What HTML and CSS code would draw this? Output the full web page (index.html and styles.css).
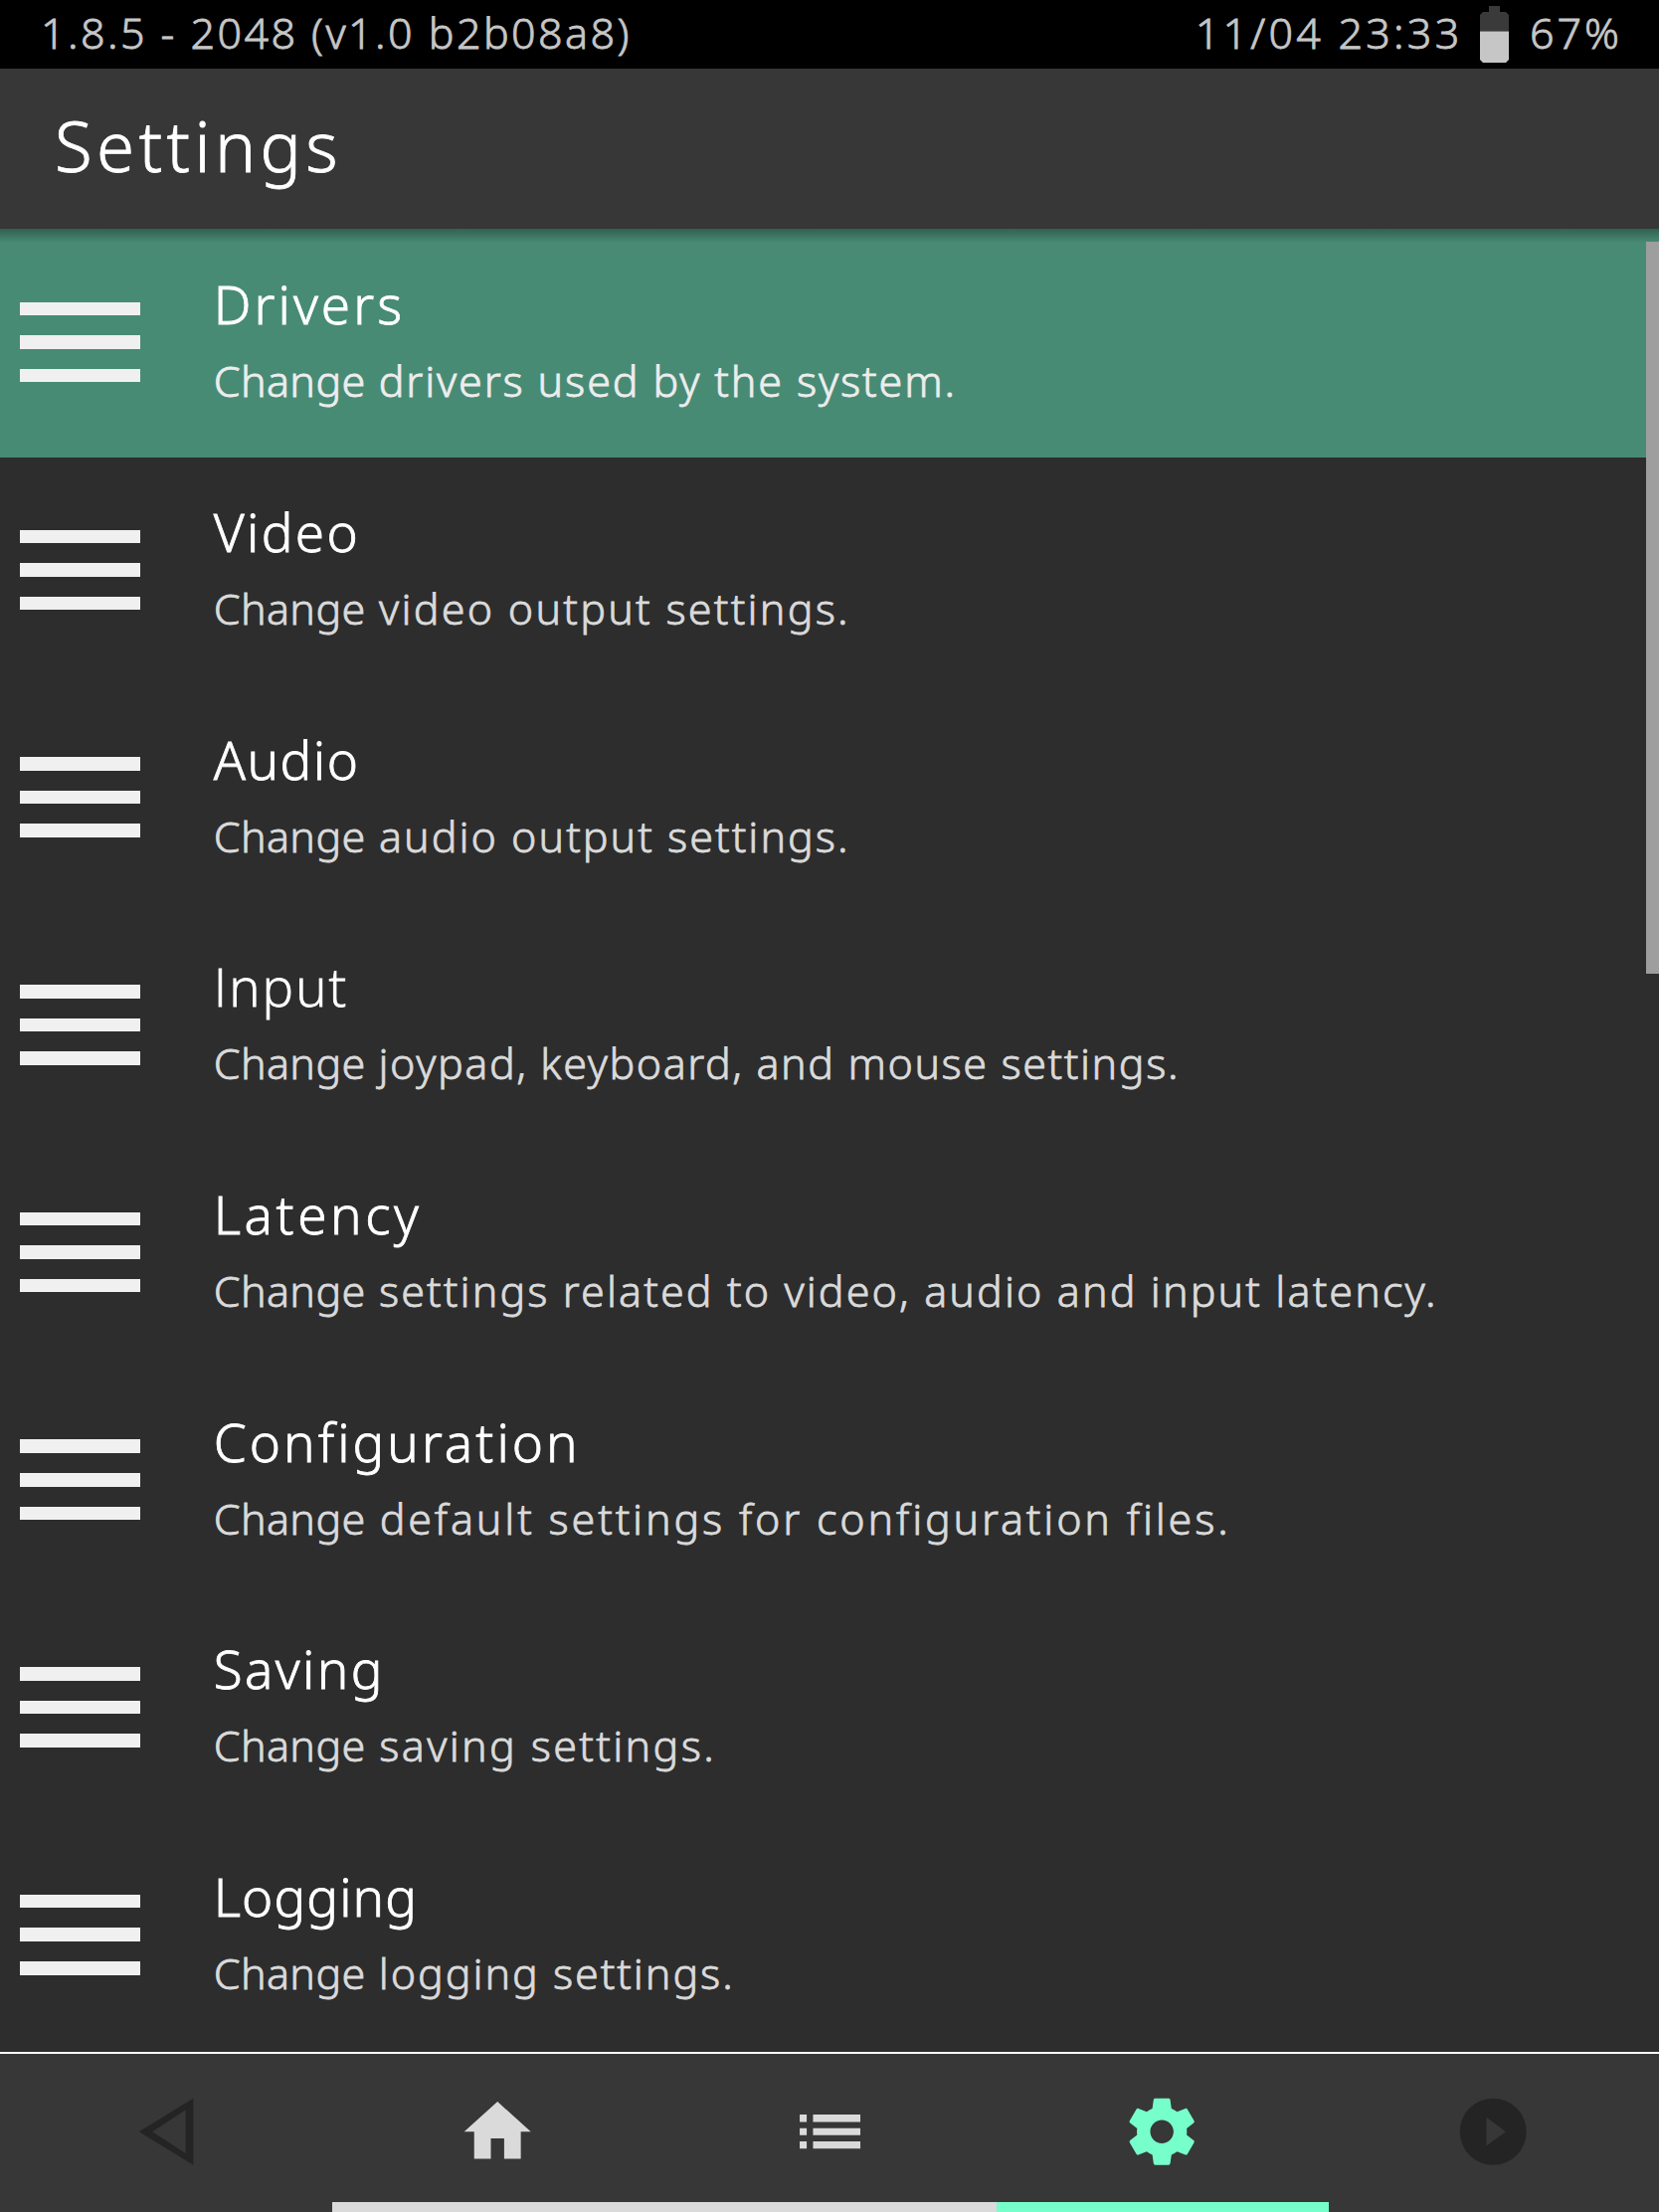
FILE: index.html
```html
<!DOCTYPE html>
<html lang="en">
<head>
<meta charset="utf-8">
<title>Settings</title>
<link rel="stylesheet" href="styles.css">
</head>
<body>
<div class="screen">
  <div class="status">
    <span class="version">1.8.5 - 2048 (v1.0 b2b08a8)</span>
    <span class="clock">11/04 23:33</span>
    <svg class="battery" viewBox="0 0 29 57"><path fill="#3a3a3a" d="M9 0h11v6h6l3 3v17H0V9l3-3h6z"/><path fill="#757575" d="M0 25h29v1H0z"/><path fill="#c6c6c6" d="M0 26h29v28l-3 3H3l-3-3z"/></svg>
    <span class="percent">67%</span>
  </div>
  <header class="header"><h1>Settings</h1></header>
  <main class="body">
    <ul class="list">
      <li class="row drivers selected"><span class="bars"><i></i><i></i><i></i></span><div class="text"><h2>Drivers</h2><p><span class="verb">Change</span> drivers used by the system.</p></div></li>
      <li class="row video"><span class="bars"><i></i><i></i><i></i></span><div class="text"><h2>Video</h2><p><span class="verb">Change</span> video output settings.</p></div></li>
      <li class="row audio"><span class="bars"><i></i><i></i><i></i></span><div class="text"><h2>Audio</h2><p><span class="verb">Change</span> audio output settings.</p></div></li>
      <li class="row input"><span class="bars"><i></i><i></i><i></i></span><div class="text"><h2>Input</h2><p><span class="verb">Change</span> joypad, keyboard, and mouse settings.</p></div></li>
      <li class="row latency"><span class="bars"><i></i><i></i><i></i></span><div class="text"><h2>Latency</h2><p><span class="verb">Change</span> settings related to video, audio and input latency.</p></div></li>
      <li class="row configuration"><span class="bars"><i></i><i></i><i></i></span><div class="text"><h2>Configuration</h2><p><span class="verb">Change</span> default settings for configuration files.</p></div></li>
      <li class="row saving"><span class="bars"><i></i><i></i><i></i></span><div class="text"><h2>Saving</h2><p><span class="verb">Change</span> saving settings.</p></div></li>
      <li class="row logging"><span class="bars"><i></i><i></i><i></i></span><div class="text"><h2>Logging</h2><p><span class="verb">Change</span> logging settings.</p></div></li>
    </ul>
    <div class="scrollbar"></div>
  </main>
  <nav class="tabs">
    <a class="tab off back"><svg viewBox="0 0 24 24"><path fill-rule="evenodd" d="M3.8 12 20.1 2v20zM7.8 12l10 6.5v-13z"/></svg></a>
    <a class="tab"><svg viewBox="0 0 24 24"><path d="M10 20.15v-6.1h4v6.1h5v-8.1h3L12 3 2 12.05h3v8.1z"/></svg></a>
    <a class="tab"><svg viewBox="0 0 24 24"><path d="M3 6.9h2.1v2.2H3zM7 6.9h14.2v2.2H7zM3 10.95h2.1v2.1H3zM7 10.95h14.2v2.1H7zM3 14.9h2.1v2.2H3zM7 14.9h14.2v2.2H7z"/></svg></a>
    <a class="tab active"><svg viewBox="0 0 24 24"><path d="M19.43 12.98c.04-.32.07-.64.07-.98s-.03-.66-.07-.98l2.11-1.65c.19-.15.24-.42.12-.64l-2-3.46c-.12-.22-.39-.3-.61-.22l-2.49 1c-.52-.4-1.08-.73-1.69-.98l-.38-2.65C14.46 2.18 14.25 2 14 2h-4c-.25 0-.46.18-.49.42l-.38 2.65c-.61.25-1.17.59-1.69.98l-2.49-1c-.23-.09-.49 0-.61.22l-2 3.46c-.13.22-.07.49.12.64l2.11 1.65c-.04.32-.07.65-.07.98s.03.66.07.98l-2.11 1.65c-.19.15-.24.42-.12.64l2 3.46c.12.22.39.3.61.22l2.49-1c.52.4 1.08.73 1.69.98l.38 2.65c.03.24.24.42.49.42h4c.25 0 .46-.18.49-.42l.38-2.65c.61-.25 1.17-.59 1.69-.98l2.49 1c.23.09.49 0 .61-.22l2-3.46c.12-.22.07-.49-.12-.64l-2.11-1.65zM12 15.5c-1.93 0-3.5-1.57-3.5-3.5s1.57-3.5 3.5-3.5 3.5 1.57 3.5 3.5-1.57 3.5-3.5 3.5z"/></svg></a>
    <a class="tab off"><svg viewBox="0 0 24 24"><path fill-rule="evenodd" d="M12 2a10 10 0 1 0 0 20 10 10 0 0 0 0-20zM10 16.3V7.7l5.8 4.3z"/></svg></a>
  </nav>
</div>
</body>
</html>
```

FILE: styles.css
```css
* { box-sizing: border-box; margin: 0; padding: 0; }
body {
  background: #2d2d2d;
  color: #fff;
  font-family: "Noto Sans", "Open Sans", sans-serif;
  font-weight: 300;
  -webkit-text-stroke: 0.8px currentColor;
}
h1, h2, p { font-weight: 300; white-space: nowrap; }
.screen { width: 1668px; height: 2224px; display: flex; flex-direction: column; overflow: hidden; }

.status {
  height: 69px;
  display: flex;
  align-items: center;
  background: #000;
  color: #c6c6c6;
  font-size: 43px;
  line-height: 65px;
  padding: 0 0 4px 41px;
  white-space: nowrap;
}
.version { width: 1160.7px; letter-spacing: 2.45px; }
.clock { width: 286.3px; letter-spacing: 3.25px; }
.battery { width: 29px; height: 57px; margin-top: 4px; }
.percent { margin-left: 21px; letter-spacing: 3px; }

.header { height: 161px; background: #373737; padding: 0 55px 7px; display: flex; align-items: center; }
.header h1 { font-size: 69px; line-height: 90px; letter-spacing: 4.45px; }

.body { height: 1833px; display: flex; position: relative; }
.body::before {
  content: "";
  position: absolute;
  inset: 0 0 auto;
  height: 14px;
  background: linear-gradient(rgba(0, 0, 0, .31), rgba(0, 0, 0, 0));
}
.list { flex: 1; list-style: none; }
.row { height: 228.7px; padding: 44px 0 0 20px; display: flex; }
.row.selected { height: 230px; padding-top: 45px; background: #488b75; }
.bars { width: 121px; display: flex; flex-direction: column; gap: 20px; padding-top: 28.6px; margin-right: 73.7px; }
.bars i { height: 13.6px; background: #f0f0f0; }
.text { display: flex; flex-direction: column; gap: 17px; padding-top: 1px; }
.text h2 { font-size: 53px; line-height: 60px; }
.text p { font-size: 43px; line-height: 60px; color: #dadada; }
.selected .text p { color: #ededed; }

.text .verb { letter-spacing: 0.4px; }
.drivers h2 { letter-spacing: 3.1px; }
.drivers p { letter-spacing: 1.87px; }
.video h2 { letter-spacing: 2.4px; }
.video p { letter-spacing: 2.25px; }
.audio h2 { letter-spacing: 1.52px; }
.audio p { letter-spacing: 2.03px; }
.input h2 { font-family: "Open Sans", sans-serif; letter-spacing: 2.1px; }
.input p { letter-spacing: 1.59px; }
.latency h2 { letter-spacing: 3.6px; }
.latency p { letter-spacing: 2.11px; }
.configuration h2 { letter-spacing: 3.05px; }
.configuration p { letter-spacing: 2.83px; }
.saving h2 { letter-spacing: 2.4px; }
.saving p { letter-spacing: 2.35px; }
.logging h2 { letter-spacing: 1.1px; }
.logging p { letter-spacing: 1.95px; }

.scrollbar { position: absolute; right: 0; top: 13px; width: 13px; height: 736px; background: #9e9e9e; }

.tabs { height: 161px; display: grid; grid-template-columns: repeat(4, 334px) 1fr; background: #373737; border-top: 2px solid #fff; }
.tab { display: flex; justify-content: center; padding-top: 38px; border-bottom: 10px solid #dadada; color: #dadada; }
.tab svg { width: 80.4px; height: 80.4px; margin-right: 2.5px; fill: currentColor; }
.tab.back svg { margin-right: 0; }
.tab.active { color: #77ffcb; border-color: #77ffcb; }
.tab.off { color: #242424; border-color: transparent; }
```
